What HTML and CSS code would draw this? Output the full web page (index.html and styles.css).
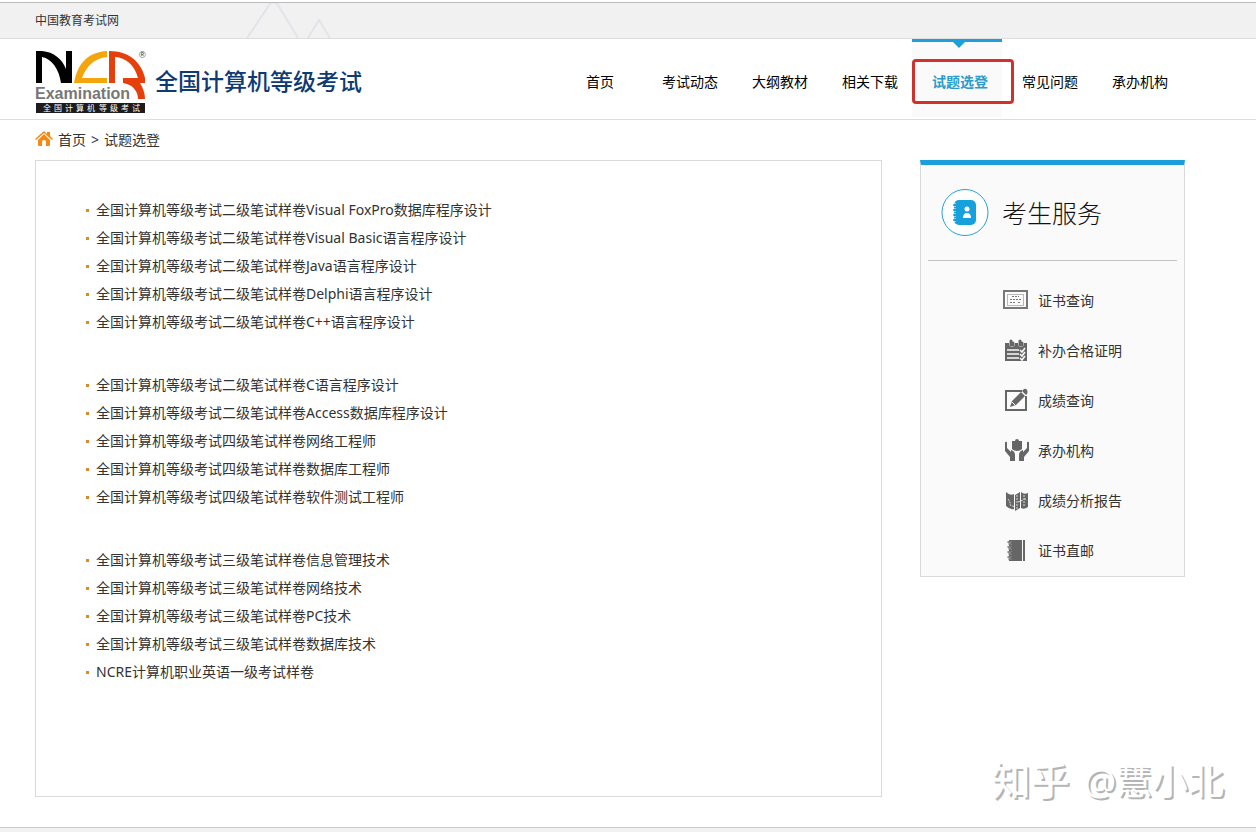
FILE: index.html
```html
<!DOCTYPE html>
<html lang="zh-CN">
<head>
<meta charset="utf-8">
<title>试题选登 - 全国计算机等级考试</title>
<meta name="viewport" content="width=device-width, initial-scale=1">
<link rel="stylesheet" href="styles.css">
</head>
<body>
<div class="topbar">
  <div class="wrap topbar-inner">
    <a class="topbar-link" href="#">中国教育考试网</a>
    <svg class="topbar-peaks" width="86" height="35" viewBox="0 0 86 35" fill="none" stroke="#e3e3ea" stroke-width="2" aria-hidden="true"><path d="M1 35 24 1Q28-3 32 2L52 35M62 35 73 17 84 35"/></svg>
  </div>
</div>

<header class="header">
  <div class="wrap header-inner">
    <a class="brand" href="#" aria-label="全国计算机等级考试">
      <svg class="logo" width="112" height="64" viewBox="0 0 112 64" aria-hidden="true">
        <path fill="#000" d="M1 1H7C19 2 27 9 31 19V1H37V33H26C24 19 17 9 7 7V33H1Z"/>
        <path fill="#f5a50c" d="M72 1V7C59 8 51 17 47 28H72V33H39C42 14 53 2 72 1Z"/>
        <path fill="#e5400c" d="M74 1C94 1 106 12 110 28V33H105C108 38 110 43 110 49H103C103 42 99 35 88 33V28H103C99 14 91 8 80 7V33H74Z"/>
        <text class="logo-en" x="0" y="49">Examination</text>
        <text class="logo-reg" x="104" y="8">®</text>
        <path fill="#1d1b1c" d="M1 53H110V63H1Z"/>
        <text class="logo-cn" x="8 19 30 41 52 64 75 86 97" y="61">全国计算机等级考试</text>
      </svg>
      <span class="brand-name">全国计算机等级考试</span>
    </a>
    <nav class="nav">
      <a class="nav-item" href="#">首页</a>
      <a class="nav-item" href="#">考试动态</a>
      <a class="nav-item" href="#">大纲教材</a>
      <a class="nav-item" href="#">相关下载</a>
      <a class="nav-item active" href="#" aria-current="page"><span class="nav-tab"></span><span class="nav-label">试题选登</span></a>
      <a class="nav-item" href="#">常见问题</a>
      <a class="nav-item" href="#">承办机构</a>
    </nav>
  </div>
</header>

<div class="wrap crumbs">
  <svg class="home-icon" width="18" height="18" viewBox="0 0 18 18" fill="#f58a12" aria-hidden="true"><path d="M9 0 12 3V1H15V5L18 8 17 9 9 2 1 9 0 8ZM9 3 15 9V14Q15 15 14 15H11V11Q11 9 9 9T7 11V15H4Q3 15 3 14V9Z"/></svg>
  <a href="#">首页</a><span class="crumb-sep">&gt;</span><a href="#">试题选登</a>
</div>

<div class="wrap content">
  <main class="panel">
    <ul class="papers">
      <li><a href="#">全国计算机等级考试二级笔试样卷Visual FoxPro数据库程序设计</a></li>
      <li><a href="#">全国计算机等级考试二级笔试样卷Visual Basic语言程序设计</a></li>
      <li><a href="#">全国计算机等级考试二级笔试样卷Java语言程序设计</a></li>
      <li><a href="#">全国计算机等级考试二级笔试样卷Delphi语言程序设计</a></li>
      <li><a href="#">全国计算机等级考试二级笔试样卷C++语言程序设计</a></li>
    </ul>
    <ul class="papers">
      <li><a href="#">全国计算机等级考试二级笔试样卷C语言程序设计</a></li>
      <li><a href="#">全国计算机等级考试二级笔试样卷Access数据库程序设计</a></li>
      <li><a href="#">全国计算机等级考试四级笔试样卷网络工程师</a></li>
      <li><a href="#">全国计算机等级考试四级笔试样卷数据库工程师</a></li>
      <li><a href="#">全国计算机等级考试四级笔试样卷软件测试工程师</a></li>
    </ul>
    <ul class="papers">
      <li><a href="#">全国计算机等级考试三级笔试样卷信息管理技术</a></li>
      <li><a href="#">全国计算机等级考试三级笔试样卷网络技术</a></li>
      <li><a href="#">全国计算机等级考试三级笔试样卷PC技术</a></li>
      <li><a href="#">全国计算机等级考试三级笔试样卷数据库技术</a></li>
      <li><a href="#">NCRE计算机职业英语一级考试样卷</a></li>
    </ul>
  </main>

  <aside class="side">
    <div class="side-head">
      <svg width="48" height="48" viewBox="0 0 48 48" aria-hidden="true">
        <circle cx="24" cy="23.500" r="23" fill="#fff" stroke="#2a9fd4"/>
        <rect x="13" y="11" width="22" height="25" rx="5" fill="#16a0dc"/>
        <path d="M11 16H15M11 21H15M11 26H15M11 31H15" stroke="#fff" stroke-width="3"/>
        <path d="M13 16H15M13 21H15M13 26H15M13 31H15" stroke="#16a0dc" stroke-width="2" stroke-linecap="round"/>
        <circle cx="26" cy="20" r="2.500" fill="#fff"/><path d="M22 29C22 25 24 24 26 24S30 25 30 29Z" fill="#fff"/>
      </svg>
      <h2 class="side-title">考生服务</h2>
    </div>
    <ul class="services">
      <li><a href="#"><svg width="26" height="26" viewBox="0 1 26 26" fill="none" stroke="#777" aria-hidden="true"><rect x="1" y="4" width="23" height="17" stroke-width="2"/><rect x="4.500" y="7.500" width="16" height="11" stroke-dasharray="1 1"/><path d="M9 9.500H16M7 12.500H18M7 15.500H13M15 15.500H18" stroke-dasharray="2 1"/></svg>证书查询</a></li>
      <li><a href="#"><svg width="26" height="26" viewBox="0 1 26 26" aria-hidden="true"><path fill="#666" d="M2 6H24V24H2Z"/><path fill="none" stroke="#fafafa" stroke-width="6" stroke-linecap="round" d="M9 3V7M18 3V7"/><path fill="none" stroke="#666" stroke-width="3" stroke-linecap="round" d="M8 4V8H10V6M17 4V8H19V6"/><path fill="none" stroke="#fafafa" stroke-width="1.500" d="M4 13H16M4 17H16M4 21H16M17 13 19 15 22 11M17 17 19 19 22 15M17 21 19 23 22 19"/></svg>补办合格证明</a></li>
      <li><a href="#"><svg width="26" height="26" viewBox="0 1 26 26" aria-hidden="true"><path fill="none" stroke="#666" stroke-width="2" d="M19 4H3V23H23V9"/><path fill="#666" d="M7 20 9 14 18 5 22 9 13 18ZM19 4 21 2Q23 1 24 3T24 7L23 8Z"/><path stroke="#fafafa" d="M9 15 12 18"/></svg>成绩查询</a></li>
      <li><a href="#"><svg width="26" height="26" viewBox="0 1 26 26" fill="#666" aria-hidden="true"><path d="M9 4H12Q12 2 14 2T16 4H19V12Q17 14 14 14T9 12ZM2 6Q2 4 4 5V11L8 15V13Q12 14 12 18V24H7V20L2 14ZM26 6Q26 4 24 5V11L20 15V13Q16 14 16 18V24H21V20L26 14Z"/></svg>承办机构</a></li>
      <li><a href="#"><svg width="26" height="26" viewBox="0 1 26 26" aria-hidden="true"><path fill="#666" d="M3 5Q7 9 11 7V22Q7 23 3 19ZM12 8 17 5V21L12 24ZM18 5Q21 8 25 6V20Q21 23 18 21Z"/><path fill="none" stroke="#ddd" stroke-dasharray="2 1" d="M5 12 7 15V18L12 20M14 8V22M15 15 20 13M21 8V20M21 12H24"/></svg>成绩分析报告</a></li>
      <li><a href="#"><svg width="26" height="26" viewBox="0 1 26 26" aria-hidden="true"><path fill="#666" d="M6 3H19V24H6ZM20 3H22V24H20Z"/><path fill="none" stroke="#fafafa" stroke-width="3" d="M5 6H9M5 11H9M5 16H9M5 21H9"/><path fill="none" stroke="#666" stroke-width="1.500" stroke-linecap="round" d="M5 5H8Q10 6 8 7H6M5 10H8Q10 11 8 12H6M5 15H8Q10 16 8 17H6M5 20H8Q10 21 8 22H6"/></svg>证书直邮</a></li>
    </ul>
  </aside>
</div>

<footer class="footer"></footer>
<div class="watermark"><span class="watermark-site">知乎</span>@慧小北</div>
</body>
</html>
```
FILE: styles.css
```css
*, *::before, *::after { box-sizing: border-box; }

body {
  margin: 0;
  min-height: 100vh;
  display: flex;
  flex-direction: column;
  position: relative;
  background: #fff;
  color: #333;
  font: 14px/28px "Noto Sans", "Noto Sans CJK SC", sans-serif;
}

a { color: inherit; text-decoration: none; }
ul { list-style: none; margin: 0; padding: 0; }
svg { flex: none; }

.wrap { padding: 0 71px 0 35px; }

.topbar {
  margin-top: 2px;
  border-top: 1px solid #bbb;
  border-bottom: 1px solid #ddd;
  background: #f1f1f1;
}
.topbar-inner { display: flex; align-items: center; height: 35px; gap: 127px; }
.topbar-link { font-size: 12px; line-height: 18px; }

.header { border-bottom: 1px solid #ddd; }
.header-inner { display: flex; justify-content: space-between; height: 80px; }
.brand { display: flex; align-items: center; gap: 8px; padding-top: 4px; }
.logo { margin-top: 2px; overflow: visible; }
.logo-en { font: bold 16px "Liberation Sans", sans-serif; fill: #777; }
.logo-reg { font: 9px "Liberation Sans", sans-serif; fill: #333; }
.logo-cn { font: 8px "Noto Sans CJK SC", sans-serif; fill: #fff; }
.brand-name {
  color: #0d3b72;
  font-size: 23px;
  font-weight: 500;
  line-height: 32px;
  white-space: nowrap;
}

.nav { display: flex; }
.nav-item {
  position: relative;
  width: 90px;
  height: 78px;
  padding-top: 29px;
  color: #000;
  text-align: center;
  white-space: nowrap;
}
.nav-item.active { color: #2a9ccb; font-weight: 700; }
.nav-label { position: relative; }
.nav-tab {
  position: absolute;
  top: 0;
  left: -3px;
  width: 90px;
  height: 78px;
  border-top: 3px solid #1b9fda;
  background: #fafafa;
}
.nav-tab::before {
  content: "";
  position: absolute;
  top: 0;
  left: 41px;
  border: 6px solid transparent;
  border-top-color: #1b9fda;
  border-bottom: 0;
}
.nav-tab::after {
  content: "";
  position: absolute;
  z-index: 1;
  top: 17px;
  left: 0;
  width: 102px;
  height: 45px;
  border: 3px solid #d0312a;
  border-radius: 4px;
}

.crumbs { display: flex; align-items: center; height: 40px; }
.home-icon { margin-right: 5px; }
.crumb-sep { margin: 0 5px; }

.content { display: flex; align-items: flex-start; gap: 38px; }

.panel {
  flex: 1;
  min-height: 637px;
  padding: 35px 50px;
  border: 1px solid #d9d9d9;
}
.papers + .papers { margin-top: 35px; }
.papers li { display: flex; align-items: center; gap: 7px; }
.papers li::before {
  content: "";
  flex: none;
  width: 3px;
  height: 3px;
  background: #d98a2b;
}

.side {
  width: 265px;
  border: 1px solid #d9d9d9;
  border-top: 5px solid #1b9fda;
  background: #fafafa;
}
.side-head {
  display: flex;
  align-items: center;
  gap: 13px;
  height: 96px;
  margin: 0 7px;
  padding-left: 13px;
  border-bottom: 1px solid #c4c4c4;
}
.side-title { margin: 0; color: #111; font-size: 25px; font-weight: 300; line-height: 36px; }
.services { padding: 15px 0 0 82px; }
.services a { display: flex; align-items: center; gap: 9px; height: 50px; }

.footer {
  flex: 1;
  margin-top: 30px;
  border-top: 1px solid #ccc;
  background: #f1f1f1;
}

.watermark {
  position: absolute;
  right: 32px;
  bottom: 24px;
  color: #fff;
  font-size: 36px;
  line-height: 52px;
  text-shadow: 2px 2px 0 #b4b4b4;
}
.watermark-site { margin-right: 14px; font-size: 39px; font-weight: 500; }
```
